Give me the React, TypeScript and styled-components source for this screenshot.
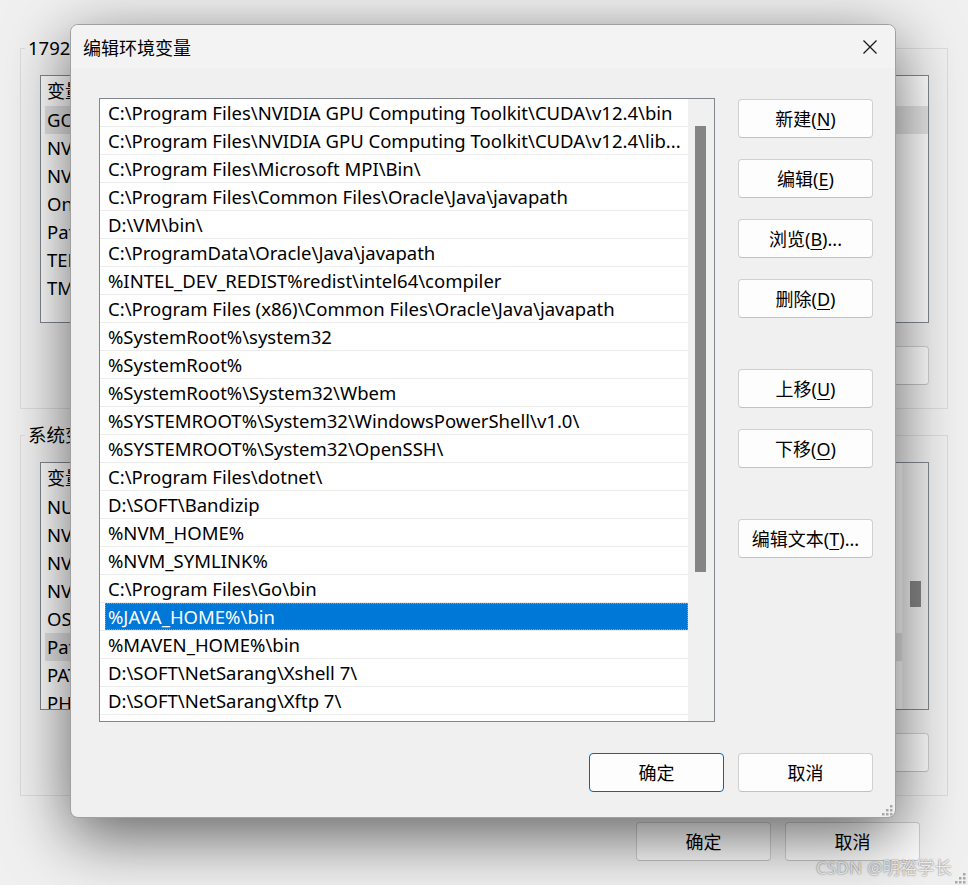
import React from "react";
import styled, { createGlobalStyle } from "styled-components";

const GlobalStyle = createGlobalStyle`
  html, body {
    margin: 0;
    padding: 0;
  }
  body {
    background: #f0f0f0;
    font-family: "Noto Sans", "Noto Sans CJK SC", sans-serif;
    color: #000;
  }
`;

const Desktop = styled.div`
  position: relative;
  width: 968px;
  height: 885px;
  overflow: hidden;
  background: #f0f0f0;
`;

/* ---------- parent window (环境变量) ---------- */

const ParentWindow = styled.div`
  display: flex;
  flex-direction: column;
  box-sizing: border-box;
  height: 100%;
  padding: 48px 20px 0 20px;
`;

const GroupBox = styled.div<{ $gap?: number }>`
  display: flex;
  flex-direction: column;
  border: 1px solid #dcdcdc;
  padding: 0 18px 23px 19px;
  margin-top: ${(p) => p.$gap ?? 0}px;
`;

const Caption = styled.div`
  align-self: flex-start;
  margin: -13px 0 0 -15px;
  padding: 0 3px;
  height: 24px;
  line-height: 24px;
  font-size: 18.5px;
  background: #f0f0f0;
`;

const VarList = styled.div`
  display: flex;
  margin-top: 15px;
  height: 248px;
  box-sizing: border-box;
  border: 1px solid #828790;
  background: #fff;
  overflow: hidden;
`;

const VarColumn = styled.div`
  flex: 1;
  display: flex;
  flex-direction: column;
`;

const VarHeader = styled.div`
  height: 30px;
  line-height: 30px;
  padding-left: 6px;
  font-size: 18px;
`;

const VarRow = styled.div<{ $selected?: boolean }>`
  height: 28px;
  line-height: 28px;
  margin-left: 4px;
  padding-left: 2px;
  font-size: 18.5px;
  white-space: nowrap;
  background: ${(p) => (p.$selected ? "#e5e5e5" : "transparent")};
`;

const ParentScroll = styled.div`
  width: 26px;
  display: flex;
  flex-direction: column;
  padding-top: 118px;
  box-sizing: border-box;
  background: #f0f0f0;
`;

const ParentThumb = styled.div`
  width: 11px;
  height: 26px;
  margin-left: 8px;
  background: #858585;
`;

const GroupButtons = styled.div`
  display: flex;
  justify-content: flex-end;
  gap: 14px;
  margin-top: 23px;
`;

const ParentFooter = styled.div`
  display: flex;
  justify-content: flex-end;
  gap: 14px;
  margin: 26px 28px 0 0;
`;

const Button = styled.button<{ $primary?: boolean; $separated?: boolean }>`
  width: 135px;
  height: 39px;
  box-sizing: border-box;
  margin: ${(p) => (p.$separated ? "30px" : "0")} 0 0 0;
  padding: 0;
  border: 1px solid ${(p) => (p.$primary ? "#0067c0" : "#d0d0d0")};
  border-bottom-color: ${(p) => (p.$primary ? "#0067c0" : "#c2c2c2")};
  border-radius: 4px;
  background: #fdfdfd;
  font-family: "Noto Sans", "Noto Sans CJK SC", sans-serif;
  font-size: 18px;
  color: #000;
  line-height: 1;
  display: flex;
  align-items: center;
  justify-content: center;
  flex-shrink: 0;

  u {
    text-decoration-thickness: 1px;
    text-underline-offset: 3px;
  }
`;

/* ---------- front dialog (编辑环境变量) ---------- */

const Dialog = styled.div`
  position: absolute;
  left: 70px;
  top: 24px;
  width: 826px;
  height: 794px;
  box-sizing: border-box;
  border: 1px solid #a0a0a0;
  border-radius: 8px;
  background: #f0f0f0;
  box-shadow: 0 18px 64px rgba(0, 0, 0, 0.6);
  display: flex;
  flex-direction: column;
  overflow: hidden;
`;

const TitleBar = styled.div`
  height: 43px;
  display: flex;
  align-items: center;
  justify-content: space-between;
  padding-left: 12px;
  background: #f3f3f3;
  flex-shrink: 0;
`;

const Title = styled.div`
  font-family: "Noto Sans CJK SC", sans-serif;
  font-size: 18px;
`;

const CloseButton = styled.div`
  width: 46px;
  height: 43px;
  margin-right: 2px;
  display: flex;
  align-items: center;
  justify-content: center;
`;

const Body = styled.div`
  display: flex;
  gap: 23px;
  padding: 30px 0 0 28px;
`;

const PathList = styled.div`
  width: 616px;
  height: 624px;
  box-sizing: border-box;
  border: 1px solid #828790;
  background: #fff;
  display: flex;
`;

const PathRows = styled.div`
  flex: 1;
  display: flex;
  flex-direction: column;
  overflow: hidden;
`;

const PathRow = styled.div`
  height: 28px;
  box-sizing: border-box;
  flex-shrink: 0;
  display: flex;
  padding-left: 5px;
  border-bottom: 1px solid #ececec;
`;

const PathCell = styled.div<{ $selected?: boolean }>`
  flex: 1;
  box-sizing: border-box;
  font-size: 18.5px;
  white-space: nowrap;
  overflow: hidden;
  color: ${(p) => (p.$selected ? "#fff" : "#000")};
  background: ${(p) => (p.$selected ? "#0078d7" : "transparent")};
  border: ${(p) => (p.$selected ? "1px dotted #f08a24" : "none")};
  padding-left: ${(p) => (p.$selected ? "2px" : "3px")};
  line-height: ${(p) => (p.$selected ? "25px" : "27px")};
`;

const ScrollTrack = styled.div`
  width: 26px;
  display: flex;
  flex-direction: column;
  padding-top: 27px;
  box-sizing: border-box;
  background: #f0f0f0;
`;

const ScrollThumb = styled.div`
  width: 11px;
  height: 446px;
  margin-left: 7px;
  background: #858585;
`;

const ButtonStack = styled.div`
  display: flex;
  flex-direction: column;
  gap: 21px;
  padding-top: 1px;
`;

const Footer = styled.div`
  display: flex;
  justify-content: flex-end;
  gap: 14px;
  margin-top: 31px;
  padding-right: 22px;
`;

const Grip = styled.svg<{ $right: number; $bottom: number }>`
  position: absolute;
  right: ${(p) => p.$right}px;
  bottom: ${(p) => p.$bottom}px;
`;

const Watermark = styled.div`
  position: absolute;
  right: 16px;
  bottom: 6px;
  font-size: 17px;
  color: rgba(250, 250, 250, 0.92);
  text-shadow: 0 0 1.5px rgba(0, 0, 0, 0.65);
  letter-spacing: 0.3px;
`;

const paths: string[] = [
  "C:\\Program Files\\NVIDIA GPU Computing Toolkit\\CUDA\\v12.4\\bin",
  "C:\\Program Files\\NVIDIA GPU Computing Toolkit\\CUDA\\v12.4\\lib...",
  "C:\\Program Files\\Microsoft MPI\\Bin\\",
  "C:\\Program Files\\Common Files\\Oracle\\Java\\javapath",
  "D:\\VM\\bin\\",
  "C:\\ProgramData\\Oracle\\Java\\javapath",
  "%INTEL_DEV_REDIST%redist\\intel64\\compiler",
  "C:\\Program Files (x86)\\Common Files\\Oracle\\Java\\javapath",
  "%SystemRoot%\\system32",
  "%SystemRoot%",
  "%SystemRoot%\\System32\\Wbem",
  "%SYSTEMROOT%\\System32\\WindowsPowerShell\\v1.0\\",
  "%SYSTEMROOT%\\System32\\OpenSSH\\",
  "C:\\Program Files\\dotnet\\",
  "D:\\SOFT\\Bandizip",
  "%NVM_HOME%",
  "%NVM_SYMLINK%",
  "C:\\Program Files\\Go\\bin",
  "%JAVA_HOME%\\bin",
  "%MAVEN_HOME%\\bin",
  "D:\\SOFT\\NetSarang\\Xshell 7\\",
  "D:\\SOFT\\NetSarang\\Xftp 7\\",
  "",
];

const SELECTED = 18;

const userVars = ["GOPATH", "NVM_HOME", "NVM_SYMLINK", "OneDrive", "Path", "TEMP", "TMP"];
const systemVars = [
  "NUMBER_OF_PROCESSORS",
  "NVCUDASAMPLES_ROOT",
  "NVCUDASAMPLES12_4_ROOT",
  "NVTOOLSEXT_PATH",
  "OS",
  "Path",
  "PATHEXT",
  "PHP_HOME",
];

const Label = ({ text, mn, tail = "" }: { text: string; mn: string; tail?: string }) => (
  <span>
    {text}(<u>{mn}</u>){tail}
  </span>
);

const GripIcon = ({ right, bottom }: { right: number; bottom: number }) => (
  <Grip $right={right} $bottom={bottom} width="12" height="12" viewBox="0 0 12 12">
    <g fill="#a8a8a8">
      <rect x="9" y="1" width="2.5" height="2.5" />
      <rect x="5" y="5" width="2.5" height="2.5" />
      <rect x="9" y="5" width="2.5" height="2.5" />
      <rect x="1" y="9" width="2.5" height="2.5" />
      <rect x="5" y="9" width="2.5" height="2.5" />
      <rect x="9" y="9" width="2.5" height="2.5" />
    </g>
  </Grip>
);

const App: React.FC = () => {
  return (
    <Desktop>
      <GlobalStyle />
      <ParentWindow>
        <GroupBox>
          <Caption>1792 的用户变量(U)</Caption>
          <VarList>
            <VarColumn>
              <VarHeader>变量</VarHeader>
              {userVars.map((v, i) => (
                <VarRow key={v} $selected={i === 0}>
                  {v}
                </VarRow>
              ))}
            </VarColumn>
          </VarList>
          <GroupButtons>
            <Button>
              <Label text="新建" mn="N" tail="..." />
            </Button>
            <Button>
              <Label text="编辑" mn="E" tail="..." />
            </Button>
            <Button>
              <Label text="删除" mn="D" />
            </Button>
          </GroupButtons>
        </GroupBox>

        <GroupBox $gap={26}>
          <Caption>系统变量(S)</Caption>
          <VarList>
            <VarColumn>
              <VarHeader>变量</VarHeader>
              {systemVars.map((v, i) => (
                <VarRow key={v} $selected={i === 5}>
                  {v}
                </VarRow>
              ))}
            </VarColumn>
            <ParentScroll>
              <ParentThumb />
            </ParentScroll>
          </VarList>
          <GroupButtons>
            <Button>
              <Label text="新建" mn="W" tail="..." />
            </Button>
            <Button>
              <Label text="编辑" mn="I" tail="..." />
            </Button>
            <Button>
              <Label text="删除" mn="L" />
            </Button>
          </GroupButtons>
        </GroupBox>

        <ParentFooter>
          <Button>确定</Button>
          <Button>取消</Button>
        </ParentFooter>
      </ParentWindow>
      <GripIcon right={2} bottom={1} />
      <Watermark>CSDN @明裕学长</Watermark>

      <Dialog>
        <TitleBar>
          <Title>编辑环境变量</Title>
          <CloseButton>
            <svg width="16" height="16" viewBox="0 0 16 16">
              <path d="M1.5 1.5 L14.5 14.5 M14.5 1.5 L1.5 14.5" stroke="#1b1b1b" strokeWidth="1.3" />
            </svg>
          </CloseButton>
        </TitleBar>
        <Body>
          <PathList>
            <PathRows>
              {paths.map((p, i) => (
                <PathRow key={i}>
                  <PathCell $selected={i === SELECTED}>{p}</PathCell>
                </PathRow>
              ))}
            </PathRows>
            <ScrollTrack>
              <ScrollThumb />
            </ScrollTrack>
          </PathList>
          <ButtonStack>
            <Button>
              <Label text="新建" mn="N" />
            </Button>
            <Button>
              <Label text="编辑" mn="E" />
            </Button>
            <Button>
              <Label text="浏览" mn="B" tail="..." />
            </Button>
            <Button>
              <Label text="删除" mn="D" />
            </Button>
            <Button $separated>
              <Label text="上移" mn="U" />
            </Button>
            <Button>
              <Label text="下移" mn="O" />
            </Button>
            <Button $separated>
              <Label text="编辑文本" mn="T" tail="..." />
            </Button>
          </ButtonStack>
        </Body>
        <Footer>
          <Button $primary>确定</Button>
          <Button>取消</Button>
        </Footer>
        <GripIcon right={2} bottom={1} />
      </Dialog>
    </Desktop>
  );
};

export default App;
